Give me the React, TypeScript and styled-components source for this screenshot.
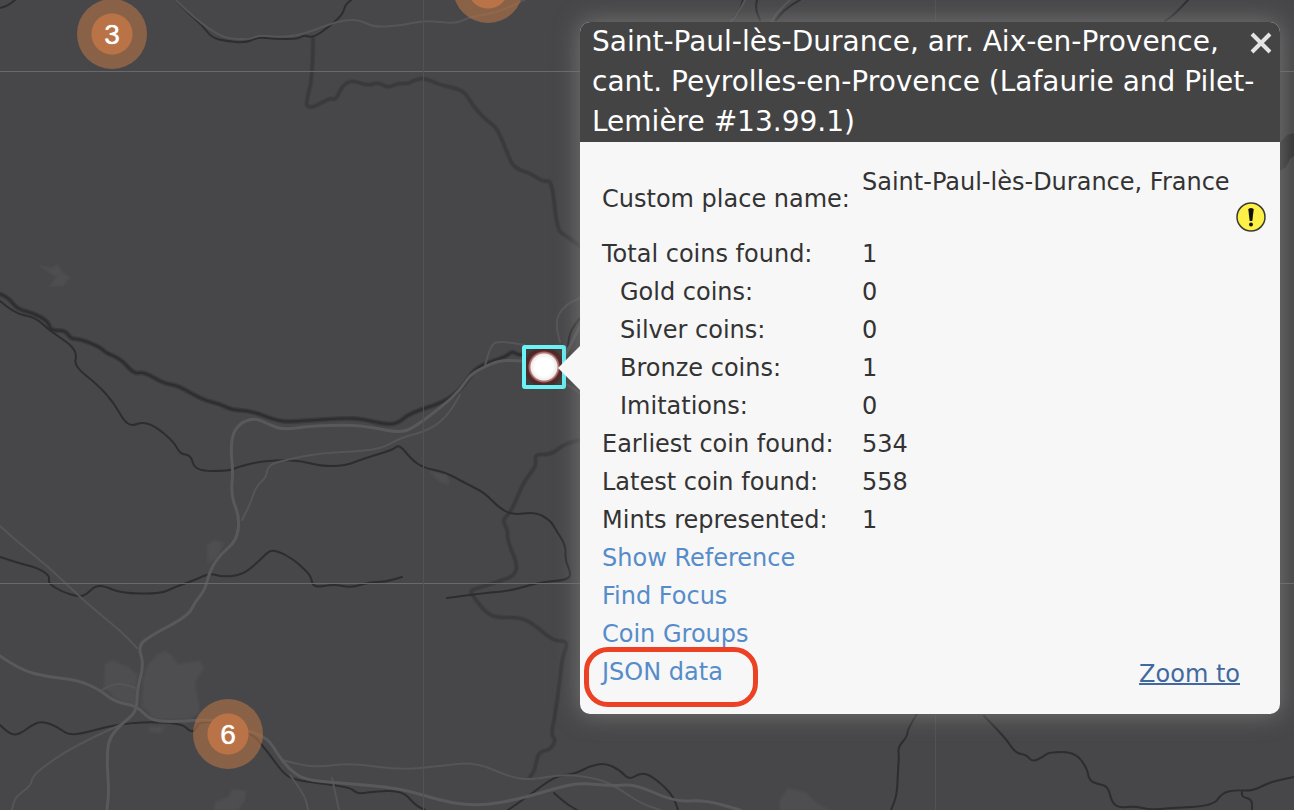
import React from "react";
import styled, { createGlobalStyle } from "styled-components";

const GlobalStyle = createGlobalStyle`
  *, *::before, *::after { box-sizing: border-box; }
  body { margin: 0; background: #474749; }
`;

const MapView = styled.main`
  position: relative;
  min-height: 100vh;
  overflow: hidden;
  background: #474749;
  font-family: Verdana, "DejaVu Sans", sans-serif;
`;

const Basemap = styled.svg`
  position: absolute;
  inset: 0;
  width: 100%;
  height: 100%;
  fill: none;
  stroke-linejoin: round;
  stroke-linecap: round;
`;

const Cluster = styled.button<{ $x: number; $y: number }>`
  position: absolute;
  left: ${(p) => p.$x}px;
  top: ${(p) => p.$y}px;
  width: 70px;
  height: 70px;
  margin: -35px 0 0 -35px;
  padding: 1px 0 0;
  border: 0;
  border-radius: 50%;
  background: radial-gradient(circle, #b97346 20px, rgba(182, 115, 70, 0.6) 21px);
  color: #fff;
  font: 28px/40px "Liberation Sans", Arial, sans-serif;
  text-shadow: 0 0 1px #fff;
`;

const Site = styled.button`
  position: absolute;
  left: 522px;
  top: 345px;
  width: 44px;
  height: 44px;
  padding: 0;
  border: 4px solid #6cf3f6;
  border-radius: 3px;
  background: radial-gradient(circle, #fff 9px, #eee 13px, #b98080 14px, #a06262 15px, #5c2827 16px, #542625 17px, #432f30 19px, #403f40 21px);
`;

const Popup = styled.section`
  position: absolute;
  left: 580px;
  top: 22px;
  width: 700px;
  border-radius: 10px;
  background: #f7f7f7;
  box-shadow: 0 0 24px #777;
  color: #333;
  font-size: 24px;
  line-height: 36px;

  &::before {
    content: "";
    position: absolute;
    left: -22px;
    top: 324px;
    border: solid transparent;
    border-width: 22px 22px 22px 0;
    border-right-color: #f7f7f7;
  }
`;

const TitleBar = styled.header`
  display: flex;
  justify-content: space-between;
  align-items: flex-start;
  padding: 0 8px 0 12px;
  border-radius: 10px 10px 0 0;
  background: #444;
  color: #fff;
`;

const Title = styled.h1`
  flex: 1;
  margin: 0 -22px 0 0;
  font-size: 28px;
  font-weight: 400;
  line-height: 40px;
`;

const Close = styled.button`
  display: flex;
  padding: 10px 0;
  border: 0;
  background: none;
  color: #e4e4e4;
`;

const Content = styled.div`
  padding: 21px 14px 23px 22px;
`;

const Facts = styled.table`
  width: 100%;
  border-collapse: collapse;
`;

const Label = styled.th<{ $nested?: boolean }>`
  width: 260px;
  padding: 1px 0 1px ${(p) => (p.$nested ? 18 : 0)}px;
  font-weight: 400;
  text-align: left;
  white-space: nowrap;
`;

const Value = styled.td`
  padding: 1px 0;
`;

const Warning = styled.span`
  display: flex;
  justify-content: flex-end;
  align-items: center;
  height: 34px;
`;

const Footer = styled.footer`
  display: flex;
  justify-content: space-between;
  align-items: flex-end;
  padding-right: 26px;
`;

const Links = styled.ul`
  margin: 0;
  padding: 0;
  list-style: none;
  line-height: 38px;
`;

const Link = styled.a<{ $circled?: boolean }>`
  position: relative;
  color: #568cc9;
  text-decoration: none;

  &::after {
    content: ${(p) => (p.$circled ? '""' : "none")};
    position: absolute;
    left: -18px;
    top: -11px;
    width: 174px;
    height: 60px;
    border: 5px solid #ec4124;
    border-radius: 24px;
  }
`;

const ZoomLink = styled.a`
  color: #41699f;
  line-height: 34px;
  text-decoration: underline;
  text-decoration-thickness: 2px;
`;

const borders = [
  "313,38 313,75 306,103 308,107 314,107 330,98 336,100 342,86 352,80 368,86 378,82 388,88 398,83 408,84 414,80 425,78 440,85 464,90 472,105 486,120 496,127 503,142 508,155 514,168 532,174 543,182 552,180 557,230 566,236 580,246",
  "580,440 565,443 551,455 534,454 537,465 525,480 518,495 511,512 502,520 508,530 507,540 521,573 495,583 470,590 472,595 487,614 500,618 520,617 535,625 553,641 569,641 562,658 560,680 555,715 551,735 556,740 550,750 538,752 535,770 530,777",
];

const rivers = [
  "0,8 6,7 15,0",
  "176,0 186,11 202,25 212,38 226,41 246,43 258,37 275,39 298,39 304,35 313,38 330,26 343,14 345,5 351,0",
  "0,294 8,297 17,309 33,313 48,321 51,331 65,330 71,339 80,339 100,347 106,353 121,359 134,374 144,372 165,384 177,385 203,400 220,404 232,410 252,411 280,422 300,421 345,418 363,419 383,424 397,424 410,413 445,402 462,388 475,368 495,360 507,356 512,351 520,356 540,352",
  "0,301 15,314 35,317 50,331 70,344 77,354 74,366 98,385 114,403 124,421 132,426 142,422 155,426 174,442 180,454 191,455 195,471 229,471 238,467 257,462 280,460 302,461 320,466 345,466 365,458 393,450 399,444 412,460 424,468 445,472 465,483 485,493 498,507 512,515 535,512 550,520 556,530 566,546 565,560 571,573 568,580 540,582 510,591 485,593 447,598",
  "0,557 18,563 38,568 50,576 48,583 62,592 80,597 87,594 95,586 105,586 120,593 160,594 175,587 195,580 210,573 222,577 243,575 260,560 270,550 280,552 294,560 303,568 311,576 313,588 335,584 350,588 370,582 385,582 402,577",
  "0,725 10,735 20,734 32,725 42,721 58,727 68,735 85,733 105,727 130,723 155,722 183,724 190,732 196,730 198,722 220,722 250,731 268,752 285,776 300,781 350,787 357,794 370,792 402,790 415,805 425,810",
  "508,810 530,795 555,776 575,774 590,766 605,763 620,770 629,780 640,773 650,775 665,787 674,798 678,810",
  "554,793 565,803 577,810",
  "917,714 908,728 907,737 898,747 899,757 898,770 897,795 891,810",
  "984,716 1005,737 1015,753 1027,755 1032,762 1043,757 1049,752 1075,752 1087,768 1089,780 1097,784 1108,786 1112,803 1120,808 1135,806 1150,810 1170,808 1213,806 1222,793 1235,790 1253,791 1270,782 1294,777",
  "1242,792 1241,797 1252,799 1252,810",
  "743,0 740,12 733,18",
  "757,0 755,8 760,20",
  "800,0 786,8 776,20",
  "1188,0 1175,14 1165,21",
  "580,318 570,330 568,346",
];

const highways = [
  "238,530 240,518 231,496 233,470 231,455 232,435 240,423 255,418 268,424 283,430 310,426 350,425 370,427 400,433 415,427 445,404 460,390 470,375 482,368 500,360 522,361",
  "238,530 237,540 220,555 210,570 205,590 195,602 188,616 150,636 138,646 144,664 137,690 137,712 120,725 108,740 107,765 109,790 107,810",
  "0,656 20,670 48,677 78,680 100,690 115,702 137,706 150,720 170,722 215,719 240,728 268,738 278,755 290,770 305,780 340,783 400,788 445,802 480,806 520,799 560,787 580,783 615,786 635,784 675,802 705,800 740,810",
  "566,354 580,326",
];

const roads = [
  "242,520 250,505 256,486 266,478 268,465 285,460 320,453 365,451 385,447 400,438 430,430 448,415 460,395",
  "485,366 490,345 500,341 525,345",
  "560,342 554,322 565,305 580,298",
  "566,384 580,393",
  "0,526 15,540 50,568 85,602 122,632 137,648",
  "102,690 112,684 124,684 135,688",
  "282,760 300,765 320,767 350,763 400,770 440,766 475,762 510,777 530,780 565,774 600,779 618,788 640,803 660,810",
  "290,775 305,795 308,810",
  "332,778 339,810",
  "120,725 75,745 33,774 31,786 15,797 12,810",
  "176,0 213,37 250,40 258,35 275,37 298,36 330,24 345,20 360,20 373,27 400,26 425,20 455,24 470,17 500,12 530,-3",
  "745,0 738,14 731,21",
  "790,0 779,10 771,22",
];

const towns = [
  "105,664 112,660 128,667 137,674 136,706 118,700 104,688",
  "148,665 157,655 165,651 172,656 178,664 200,661 204,668 195,682 200,712 190,719 155,719 142,706 143,680",
  "40,266 52,268 57,264 62,272 70,277 63,286 50,286 56,277",
  "207,545 214,540 224,543 217,558 208,563",
  "149,727 165,727 160,733 150,732",
  "215,802 228,797 233,789 246,791 245,800 238,810 214,810",
  "780,800 788,788 806,793 818,804 830,810 780,810",
  "430,472 447,474 449,484 440,482",
];

/** Turns a list of points into a path that curves through their midpoints. */
const smooth = (points: string) => {
  const p = points.split(" ").map((s) => s.split(",").map(Number));
  let d = `M${p[0]}`;
  for (let i = 1; i < p.length - 1; i++) {
    const mid = [(p[i][0] + p[i + 1][0]) / 2, (p[i][1] + p[i + 1][1]) / 2];
    d += `Q${p[i]} ${mid}`;
  }
  return `${d}L${p[p.length - 1]}`;
};

const facts: { label: string; value: string; nested?: boolean; warn?: boolean }[] = [
  { label: "Custom place name:", value: "Saint-Paul-lès-Durance, France", warn: true },
  { label: "Total coins found:", value: "1" },
  { label: "Gold coins:", value: "0", nested: true },
  { label: "Silver coins:", value: "0", nested: true },
  { label: "Bronze coins:", value: "1", nested: true },
  { label: "Imitations:", value: "0", nested: true },
  { label: "Earliest coin found:", value: "534" },
  { label: "Latest coin found:", value: "558" },
  { label: "Mints represented:", value: "1" },
];

export default function App() {
  return (
    <MapView>
      <GlobalStyle />
      <Basemap viewBox="0 0 1294 810" preserveAspectRatio="xMinYMin slice" aria-hidden="true">
        {towns.map((t) => (
          <polygon key={t} points={t} fill="#4e4e50" stroke="#4b4b4d" strokeWidth="2" />
        ))}
        {borders.map((b) => (
          <g key={b}>
            <path d={smooth(b)} stroke="#424244" strokeWidth="5" />
            <path d={smooth(b)} stroke="#3a3a3c" strokeWidth="3" />
          </g>
        ))}
        <path d={smooth(rivers[2])} stroke="#3a3a3c" strokeWidth="5" />
        {rivers.map((r) => (
          <path key={r} d={smooth(r)} stroke="#2d2d2f" strokeWidth="2" />
        ))}
        {roads.map((r) => (
          <path key={r} d={smooth(r)} stroke="#555557" strokeWidth="2" />
        ))}
        {highways.map((r) => (
          <path key={r} d={smooth(r)} stroke="#59595b" strokeWidth="3" />
        ))}
        <path d="M1294 133l-7 2-7 8v28l6-4 4-8 4-3z" fill="#333335" />
        <path d="M0 71.5H1294M0 583.5H1294" stroke="#69696b" />
        <path d="M423.5 0V810M935.5 0V810" stroke="#525254" />
      </Basemap>

      <Cluster $x={112} $y={34}>3</Cluster>
      <Cluster $x={488} $y={-12} aria-label="Coin finds" />
      <Cluster $x={228} $y={734}>6</Cluster>
      <Site aria-label="Saint-Paul-lès-Durance" />

      <Popup>
        <TitleBar>
          <Title>
            Saint-Paul-lès-Durance, arr. Aix-en-Provence, cant. Peyrolles-en-Provence (Lafaurie and Pilet-Lemière #13.99.1)
          </Title>
          <Close aria-label="Close">
            <svg width="22" height="22" viewBox="0 0 22 22" stroke="currentColor" strokeWidth="4">
              <path d="M2 2L20 20M20 2L2 20" />
            </svg>
          </Close>
        </TitleBar>
        <Content>
          <Facts>
            <tbody>
              {facts.map((f) => (
                <tr key={f.label}>
                  <Label scope="row" $nested={f.nested}>{f.label}</Label>
                  <Value>
                    {f.value}
                    {f.warn && (
                      <Warning>
                        <svg width="30" height="30" viewBox="0 0 30 30" role="img" aria-label="Warning">
                          <circle cx="15" cy="15" r="14" fill="#fdf046" stroke="#3a3a34" strokeWidth="1.5" />
                          <path d="M12.3 7.500q0-1.500 2.700-1.500t2.700 1.500L16.300 19h-2.600z" fill="#111" />
                          <circle cx="15" cy="22.500" r="2" fill="#111" />
                        </svg>
                      </Warning>
                    )}
                  </Value>
                </tr>
              ))}
            </tbody>
          </Facts>
          <Footer>
            <Links>
              <li><Link href="#reference">Show Reference</Link></li>
              <li><Link href="#focus">Find Focus</Link></li>
              <li><Link href="#groups">Coin Groups</Link></li>
              <li><Link href="#json" $circled>JSON data</Link></li>
            </Links>
            <ZoomLink href="#zoom">Zoom to</ZoomLink>
          </Footer>
        </Content>
      </Popup>
    </MapView>
  );
}
